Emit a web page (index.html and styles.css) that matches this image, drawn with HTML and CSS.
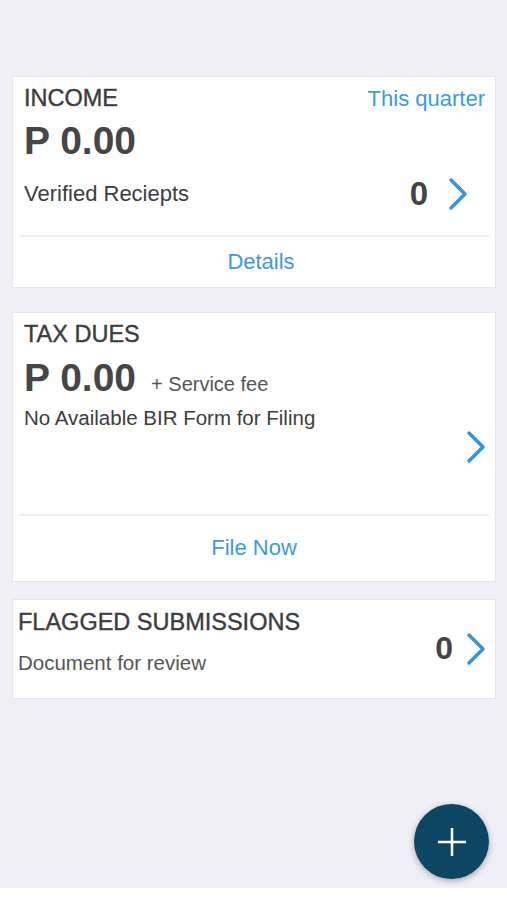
FILE: index.html
```html
<!DOCTYPE html>
<html>
  <head>
    <meta charset="UTF-8">
    <meta name="viewport" content="width=device-width,initial-scale=1">
    <title>Dashboard</title>
    <link rel="stylesheet" href="styles.css">
  </head>
  <body>

    <div class="main">

      <!-- Income -->
      <div class="card card-income">
        <div class="card-body">
          <div class="card-head">
            <span class="card-title">INCOME</span>
            <a href="#" class="link">This quarter</a>
          </div>
          <div class="amount">P 0.00</div>
          <div class="count-row">
            <span class="label">Verified Reciepts</span>
            <span class="count">0</span>
            <svg class="chevron" width="20" height="34" viewBox="0 0 20 34"><path d="M3 3 L17 17 L3 31"/></svg>
          </div>
        </div>
        <div class="divider"></div>
        <a href="#" class="card-action action-details">Details</a>
      </div>

      <!-- Tax dues -->
      <div class="card card-tax">
        <div class="card-body">
          <div class="card-title">TAX DUES</div>
          <div class="amount-row">
            <span class="amount">P 0.00</span>
            <span class="fee">+ Service fee</span>
          </div>
          <div class="label">No Available BIR Form for Filing</div>
          <svg class="chevron chevron-tax" width="20" height="34" viewBox="0 0 20 34"><path d="M3 3 L17 17 L3 31"/></svg>
        </div>
        <div class="divider"></div>
        <a href="#" class="card-action action-file">File Now</a>
      </div>

      <!-- Flagged -->
      <div class="card card-flagged">
        <div class="flagged-text">
          <div class="card-title">FLAGGED SUBMISSIONS</div>
          <div class="label label-light">Document for review</div>
        </div>
        <span class="count">0</span>
        <svg class="chevron" width="20" height="34" viewBox="0 0 20 34"><path d="M3 3 L17 17 L3 31"/></svg>
      </div>

    </div>

    <div class="bottom-bar"></div>

    <button class="fab" title="Add">
      <svg width="30" height="30" viewBox="0 0 30 30"><path d="M15 1 V29 M1 15 H29"/></svg>
    </button>

  </body>
</html>
```

FILE: styles.css
```css
html, body {
  margin: 0;
  padding: 0;
}

body {
  font-family: "Liberation Sans", Arial, Helvetica, sans-serif;
  background-color: #f0eff5;
  color: #3d3d3d;
  min-height: 900px;
  display: flex;
  flex-direction: column;
}

a {
  text-decoration: none;
}

.main {
  flex: 1;
  padding: 76px 11px 0 12px;
}

/* Cards */
.card {
  background-color: #fff;
  border: 1px solid #e4e4ea;
}

.card-body {
  padding: 7px 10px 0 11px;
}

.card-title {
  font-size: 23.5px;
  line-height: 28px;
  color: #3d3d3d;
  -webkit-text-stroke: 0.4px #3d3d3d;
}

.card-head {
  display: flex;
  justify-content: space-between;
  align-items: baseline;
}

.link {
  color: #3a9be0;
  font-size: 22px;
  line-height: 28px;
}

.amount {
  font-size: 39px;
  line-height: 44px;
  font-weight: bold;
  color: #464646;
}

.label {
  font-size: 22px;
  line-height: 24px;
  color: #3d3d3d;
}

.label-light {
  font-size: 20.5px;
  color: #555;
}

.count {
  font-size: 33px;
  font-weight: bold;
  color: #444;
}

.chevron {
  display: block;
}

.chevron path {
  fill: none;
  stroke: #2f95de;
  stroke-width: 3.5;
  stroke-linecap: round;
  stroke-linejoin: round;
}

.divider {
  height: 2px;
  background-color: #ececee;
  margin: 0 6px 0 7px;
}

.card-action {
  display: block;
  text-align: center;
  color: #3a9be0;
  font-size: 22px;
}

/* Income card */
.card-income .amount {
  margin-top: 6px;
}

.count-row {
  display: flex;
  align-items: center;
  height: 36px;
  margin: 13px 17px 23px 0;
}

.count-row .label {
  flex: 1;
}

.count-row .count {
  margin-right: 20px;
}

.action-details {
  height: 50px;
  line-height: 50px;
  padding-left: 14px;
}

/* Tax card */
.card-tax {
  margin-top: 24px;
}

.amount-row {
  display: flex;
  align-items: baseline;
  margin-top: 8px;
}

.fee {
  font-size: 20px;
  color: #555;
  margin-left: 15px;
}

.card-tax .label {
  font-size: 20.5px;
  margin-top: 6px;
}

.chevron-tax {
  margin: 0 -1px 50px auto;
}

.action-file {
  height: 65px;
  line-height: 64px;
}

/* Flagged card */
.card-flagged {
  margin-top: 17px;
  display: flex;
  align-items: center;
  padding: 8px 9px 23px 5px;
}

.flagged-text {
  flex: 1;
}

.card-flagged .label {
  margin-top: 15px;
}

.card-flagged .count,
.card-flagged .chevron {
  margin-top: 14px;
}

.card-flagged .count {
  font-size: 32px;
  margin-right: 13px;
}

.bottom-bar {
  height: 12px;
  background-color: #fff;
}

/* Floating add button */
.fab {
  position: fixed;
  right: 18px;
  bottom: 21px;
  width: 75px;
  height: 75px;
  border-radius: 50%;
  border: none;
  padding: 0;
  background-color: #0c4662;
  box-shadow: 0 2px 6px rgba(0,0,0,0.3);
  display: flex;
  align-items: center;
  justify-content: center;
  cursor: pointer;
}

.fab path {
  stroke: #fff;
  stroke-width: 2.5;
  fill: none;
}
```
